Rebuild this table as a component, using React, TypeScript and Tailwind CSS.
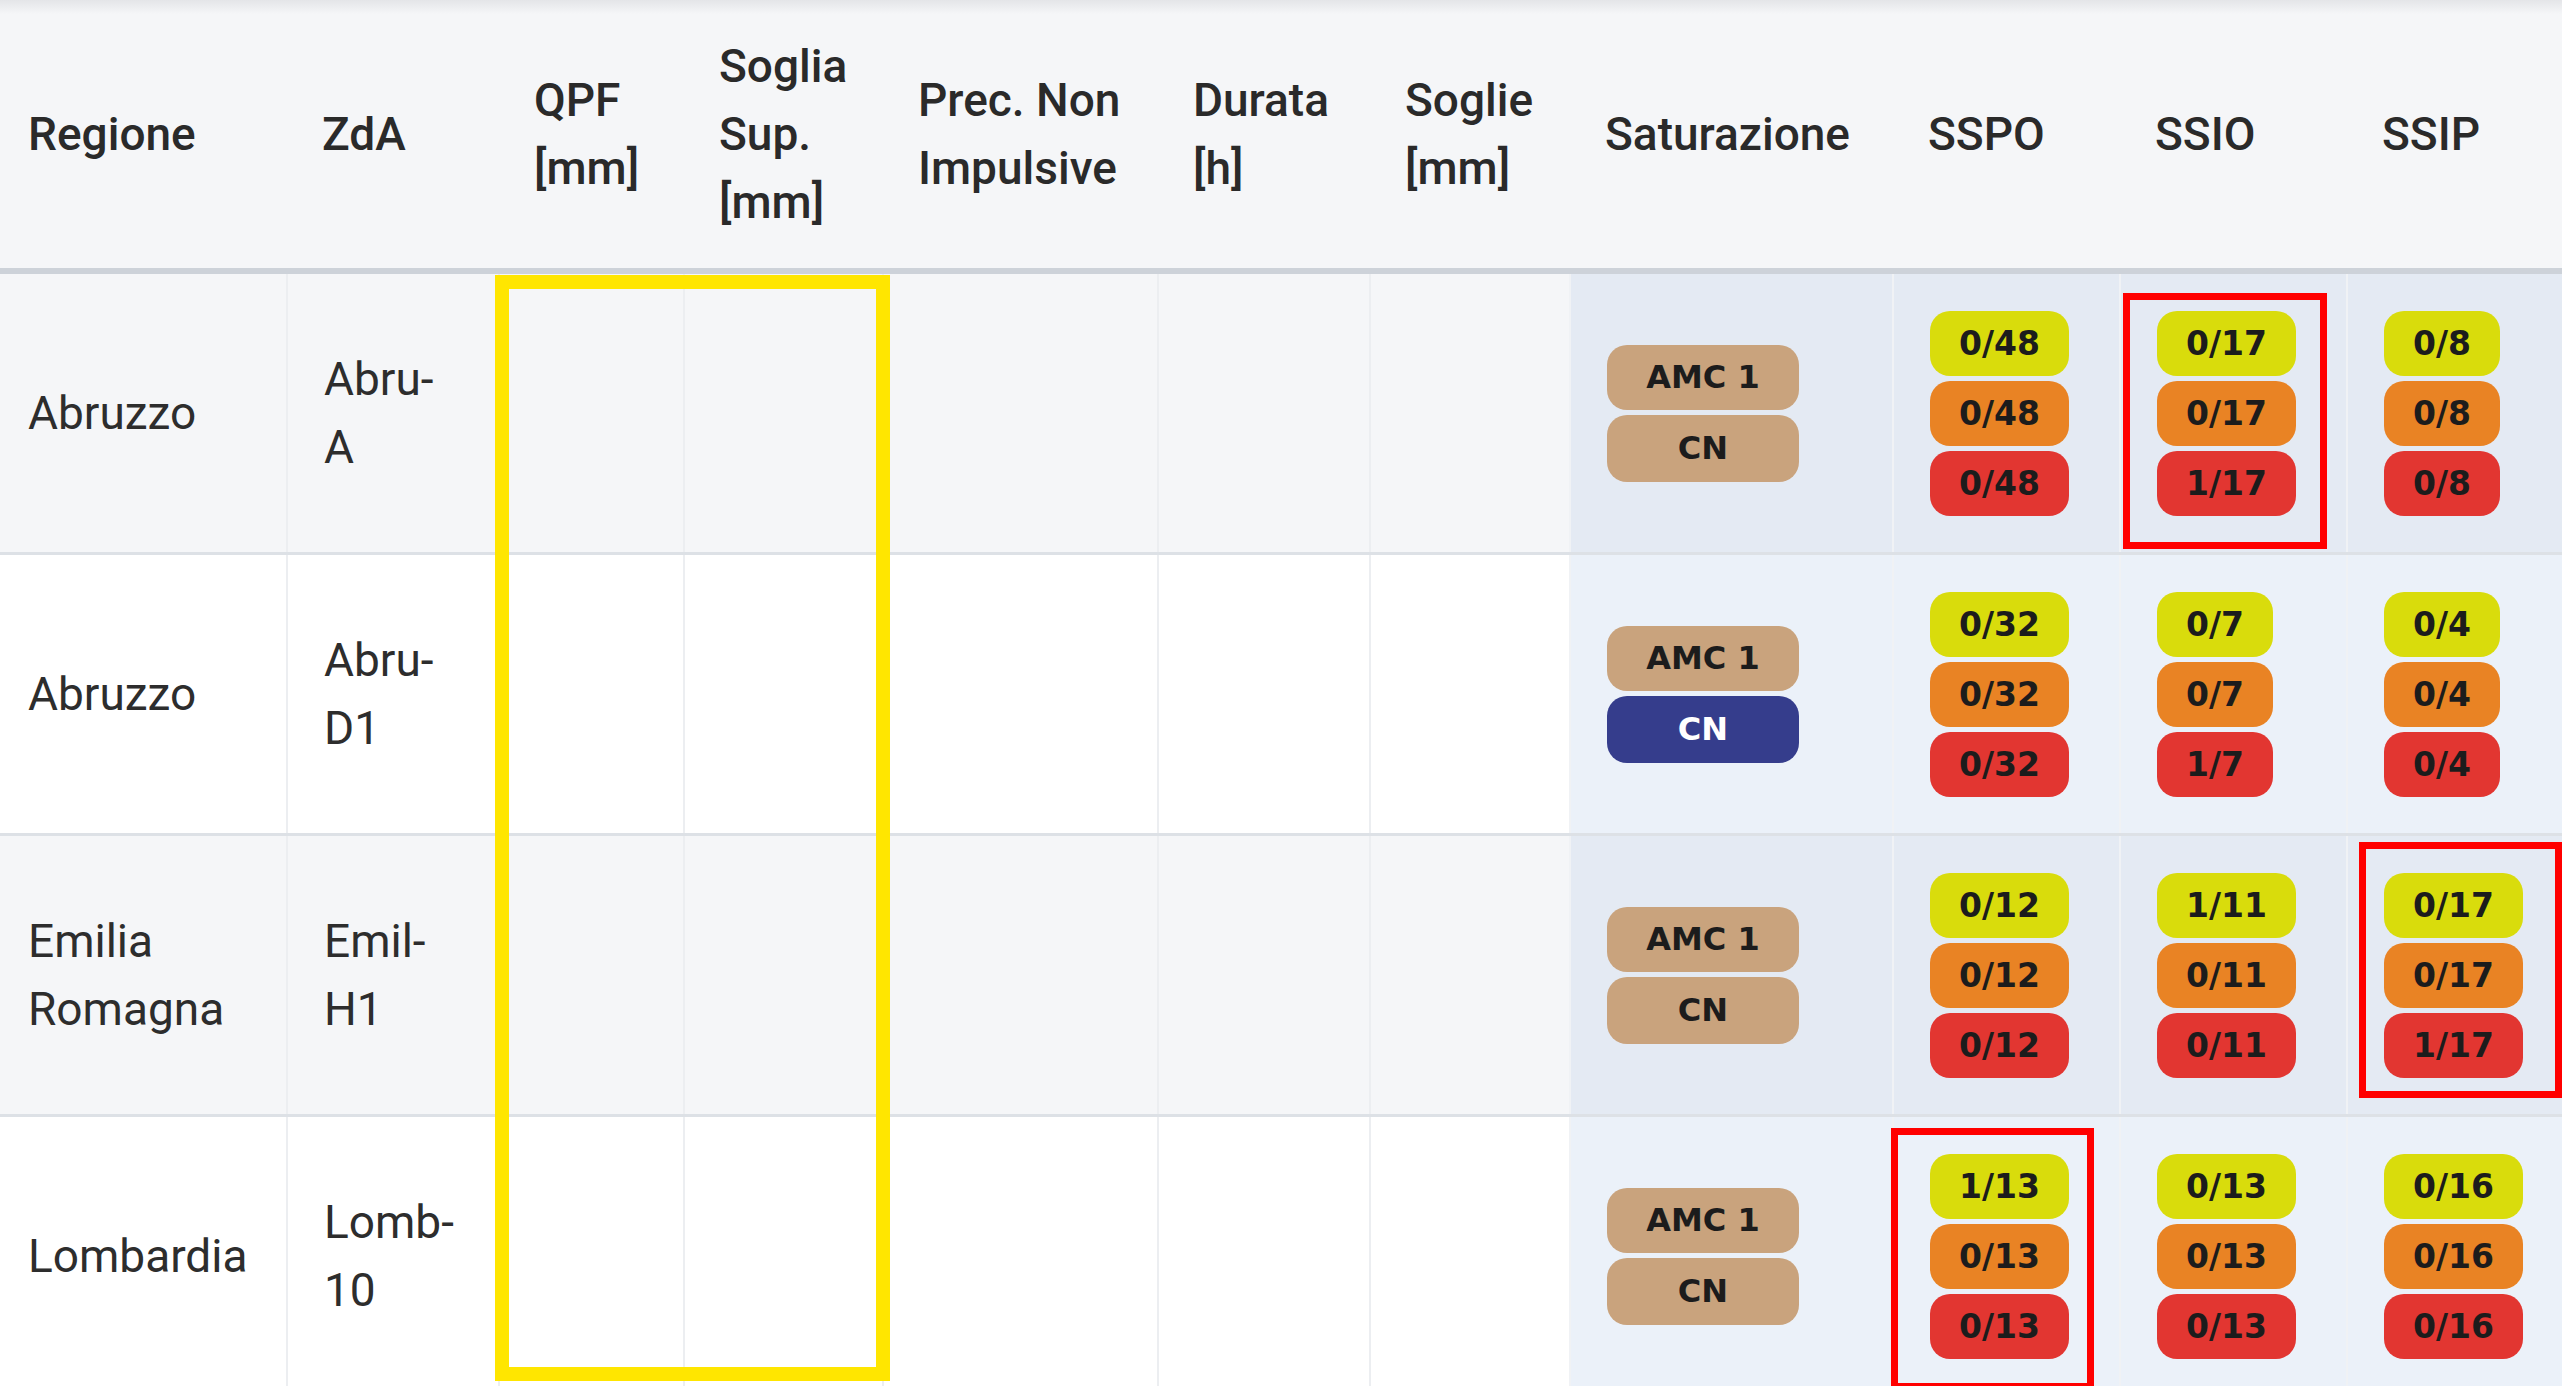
import React from 'react';

const cols = 'grid grid-cols-[286px_212px_185px_199px_275px_212px_200px_323px_227px_227px_227px]';

const headers: string[][] = [
  ['Regione'],
  ['ZdA'],
  ['QPF', '[mm]'],
  ['Soglia', 'Sup.', '[mm]'],
  ['Prec. Non', 'Impulsive'],
  ['Durata', '[h]'],
  ['Soglie', '[mm]'],
  ['Saturazione'],
  ['SSPO'],
  ['SSIO'],
  ['SSIP'],
];

type Row = {
  reg: string[];
  zda: string[];
  cnBlue: boolean;
  sspo: string[];
  ssio: string[];
  ssip: string[];
};

const rows: Row[] = [
  { reg: ['Abruzzo'], zda: ['Abru-', 'A'], cnBlue: false, sspo: ['0/48', '0/48', '0/48'], ssio: ['0/17', '0/17', '1/17'], ssip: ['0/8', '0/8', '0/8'] },
  { reg: ['Abruzzo'], zda: ['Abru-', 'D1'], cnBlue: true, sspo: ['0/32', '0/32', '0/32'], ssio: ['0/7', '0/7', '1/7'], ssip: ['0/4', '0/4', '0/4'] },
  { reg: ['Emilia', 'Romagna'], zda: ['Emil-', 'H1'], cnBlue: false, sspo: ['0/12', '0/12', '0/12'], ssio: ['1/11', '0/11', '0/11'], ssip: ['0/17', '0/17', '1/17'] },
  { reg: ['Lombardia'], zda: ['Lomb-', '10'], cnBlue: false, sspo: ['1/13', '0/13', '0/13'], ssio: ['0/13', '0/13', '0/13'], ssip: ['0/16', '0/16', '0/16'] },
];

const levels = ['bg-[#d9dc0c]', 'bg-[#e98324]', 'bg-[#e23631]'];

const Lines = ({ lines }: { lines: string[] }) => (
  <div>
    {lines.map((l, i) => (
      <div key={i}>{l}</div>
    ))}
  </div>
);

const Counts = ({ values }: { values: string[] }) => (
  <div className="flex flex-col items-start gap-[5px]">
    {values.map((v, i) => (
      <span
        key={i}
        className={`${levels[i]} inline-block h-[65px] rounded-[20px] px-[29px] text-[33px] leading-[65px] font-bold text-[#1c1c1c] font-['DejaVu_Sans',sans-serif]`}
      >
        {v}
      </span>
    ))}
  </div>
);

const Saturazione = ({ cnBlue }: { cnBlue: boolean }) => (
  <div className="flex flex-col gap-[5px] font-['DejaVu_Sans',sans-serif] text-[32px] font-bold">
    <span className="h-[65px] w-[192px] rounded-[20px] bg-[#c9a37d] text-center leading-[65px] text-[#1c1c1c]">AMC 1</span>
    <span
      className={
        cnBlue
          ? 'h-[67px] w-[192px] rounded-[20px] bg-[#353d8c] text-center leading-[67px] text-white'
          : 'h-[67px] w-[192px] rounded-[20px] bg-[#c9a37d] text-center leading-[67px] text-[#1c1c1c]'
      }
    >
      CN
    </span>
  </div>
);

export default function App() {
  return (
    <div className="relative h-[1386px] w-[2562px] overflow-hidden bg-white font-['Roboto',sans-serif] text-[46px] leading-[68px] text-[#2d2d2d]">
      <div className={`${cols} h-[274px] border-b-[6px] border-[#cdd2d9] bg-[linear-gradient(180deg,#e4e5e8_0px,#f5f6f8_14px)] font-medium text-[#2a2a2a]`}>
        {headers.map((h, i) => (
          <div key={i} className={`flex items-center ${i === 0 ? 'pl-[28px]' : 'pl-[36px]'}`}>
            <Lines lines={h} />
          </div>
        ))}
      </div>

      {rows.map((r, ri) => {
        const odd = ri % 2 === 0;
        const plain = odd ? 'bg-[#f5f6f8]' : 'bg-white';
        const tint = odd ? 'bg-[#e4eaf3]' : 'bg-[#ebf1f9]';
        const cell = 'flex items-center border-l-2 pl-[36px]';
        return (
          <div key={ri} className={`${cols} h-[281px] border-b-[3px] border-[#dde1e6]`}>
            <div className={`flex items-center pl-[28px] ${plain}`}>
              <Lines lines={r.reg} />
            </div>
            <div className={`${cell} ${plain} border-[#eceef1]`}>
              <Lines lines={r.zda} />
            </div>
            <div className={`${cell} ${plain} border-[#eceef1]`} />
            <div className={`${cell} ${plain} border-[#eceef1]`} />
            <div className={`${cell} ${plain} border-[#eceef1]`} />
            <div className={`${cell} ${plain} border-[#eceef1]`} />
            <div className={`${cell} ${plain} border-[#eceef1]`} />
            <div className={`${cell} ${tint} border-[#f0f2f5]`}>
              <Saturazione cnBlue={r.cnBlue} />
            </div>
            <div className={`${cell} ${tint} border-[#f0f2f5]`}>
              <Counts values={r.sspo} />
            </div>
            <div className={`${cell} ${tint} border-[#f0f2f5]`}>
              <Counts values={r.ssio} />
            </div>
            <div className={`${cell} ${tint} border-[#f0f2f5]`}>
              <Counts values={r.ssip} />
            </div>
          </div>
        );
      })}

      {/* highlight annotations drawn over the table */}
      <div className="absolute left-[495px] top-[275px] h-[1106px] w-[395px] border-[14px] border-[#ffe600]" />
      <div className="absolute left-[2123px] top-[293px] h-[256px] w-[204px] border-[7px] border-[#ff0000]" />
      <div className="absolute left-[2359px] top-[842px] h-[256px] w-[203px] border-[7px] border-[#ff0000]" />
      <div className="absolute left-[1891px] top-[1128px] h-[262px] w-[203px] border-[7px] border-[#ff0000]" />
    </div>
  );
}
